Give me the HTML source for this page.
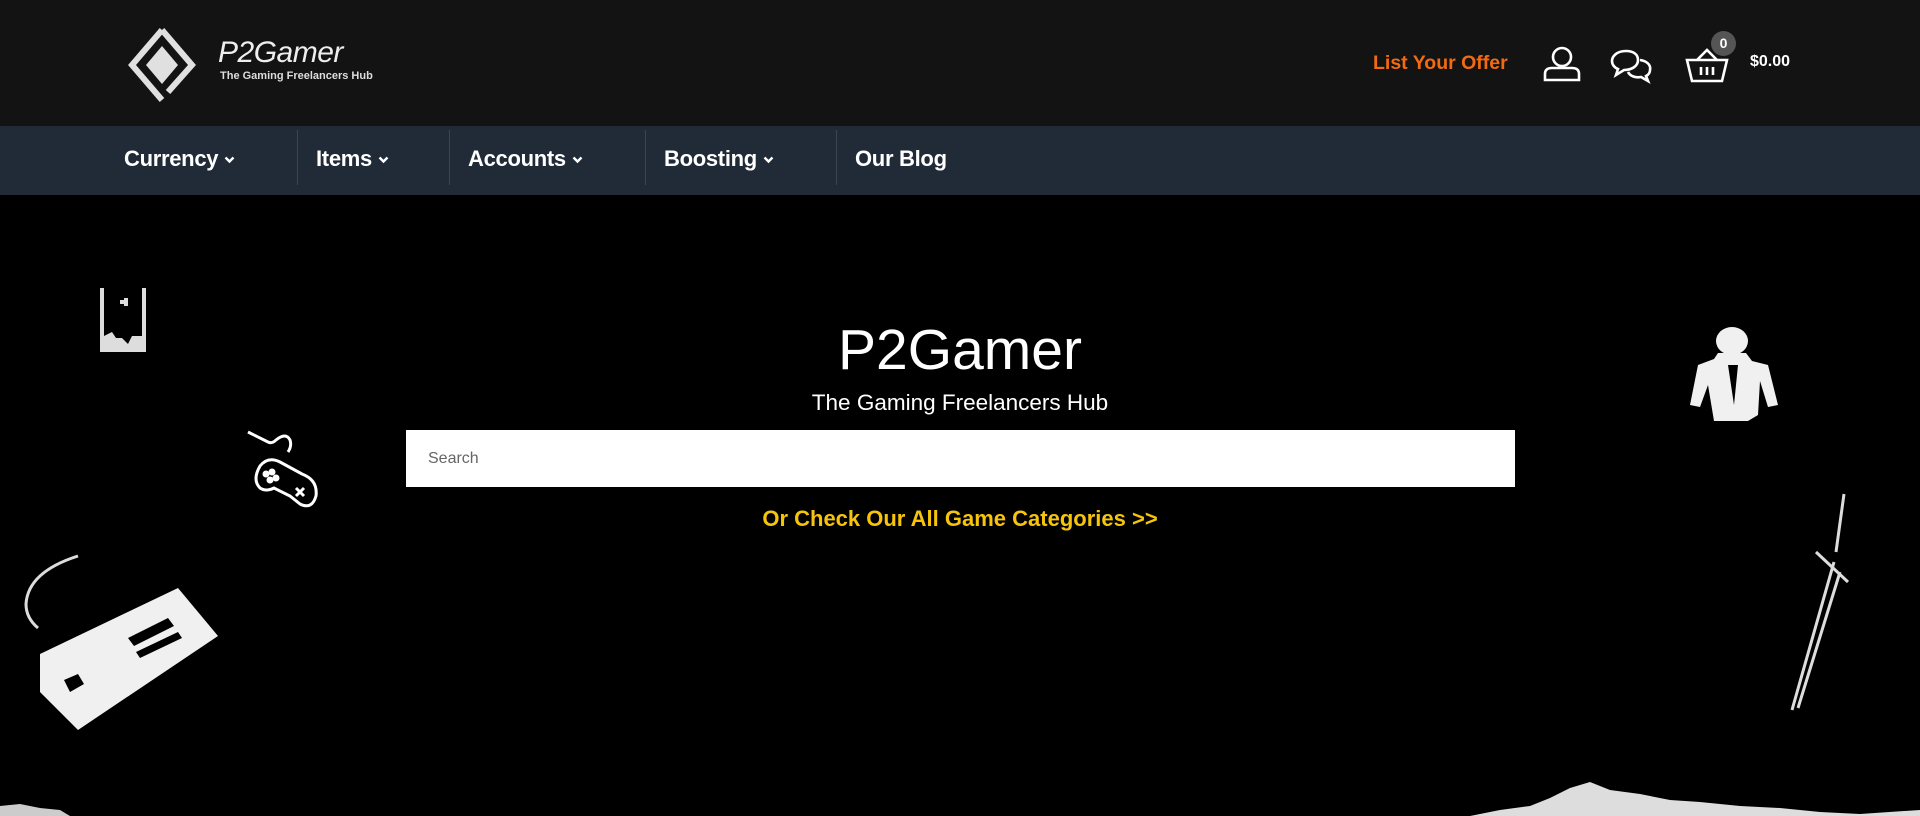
<!DOCTYPE html>
<html><head><meta charset="utf-8"><style>
*{margin:0;padding:0;box-sizing:border-box}
body{width:1920px;height:816px;overflow:hidden;background:#000;font-family:"Liberation Sans",Arial,sans-serif;position:relative}
.hdr{position:absolute;left:0;top:0;width:1920px;height:126px;background:#131313}
.nav{position:absolute;left:0;top:126px;width:1920px;height:69px;background:#212a37}
.nav span{position:absolute;top:0;height:69px;line-height:66px;color:#fff;font-weight:bold;font-size:22px;letter-spacing:-0.3px}
.nav svg{margin-left:6px;vertical-align:2px}
.sep{position:absolute;top:126px;width:1px;height:55px;margin-top:0;background:#3a4452}
.abs{position:absolute}
</style></head><body>
<div class="hdr"></div>
<svg class="abs" style="left:128px;top:28px" width="68" height="74" viewBox="0 0 68 74">
<path d="M34 2 L4 37 L34 72" fill="none" stroke="#e0e0e0" stroke-width="6"/>
<path d="M34 2 L64 37 L40 64" fill="none" stroke="#e0e0e0" stroke-width="6"/>
<path d="M34 18 L50 37 L34 56 L18 37Z" fill="#e0e0e0"/>
</svg>
<div class="abs" style="left:218px;top:36px;color:#eee;font-size:30px;font-style:italic;letter-spacing:-0.5px">P2Gamer</div>
<div class="abs" style="left:220px;top:70px;color:#ddd;font-size:11px;font-weight:bold">The Gaming Freelancers Hub</div>

<div class="abs" style="left:1373px;top:52px;color:#f26a11;font-size:19.5px;font-weight:bold">List Your Offer</div>
<svg class="abs" style="left:1543px;top:46px" width="38" height="36" viewBox="0 0 38 36" fill="none" stroke="#fff" stroke-width="2.6">
<circle cx="19" cy="11" r="9"/><path d="M2 34 V28 Q2 22 9 22 H29 Q36 22 36 28 V34Z"/></svg>
<svg class="abs" style="left:1610px;top:48px" width="44" height="36" viewBox="0 0 44 36" fill="none" stroke="#fff" stroke-width="2.6">
<path d="M16 3 C6 3 2 9 2 13 C2 17 5 20 8 21 L6 27 L14 22 C22 22 28 18 28 12 C28 6 23 3 16 3Z"/>
<path d="M30 12 C37 13 41 17 40 22 C40 25 38 27 36 28 L38 33 L31 29 C25 30 20 28 18 24"/></svg>
<svg class="abs" style="left:1685px;top:46px" width="44" height="38" viewBox="0 0 44 38" fill="none" stroke="#fff" stroke-width="2.6">
<path d="M12 14 L22 4 L32 14"/><path d="M2 14 H42 L37 35 H7Z"/><path d="M16 21 V29 M22 21 V29 M28 21 V29"/></svg>
<div class="abs" style="left:1711px;top:31px;width:25px;height:25px;border-radius:50%;background:#555;color:#fff;font-size:14px;font-weight:bold;text-align:center;line-height:25px">0</div>
<div class="abs" style="left:1750px;top:53px;color:#fff;font-size:16px;font-weight:bold">$0.00</div>

<div class="nav">
<span style="left:124px">Currency<svg width="11" height="8" viewBox="0 0 11 8"><path d="M1.5 1.5 L5.5 5.5 L9.5 1.5" fill="none" stroke="#fff" stroke-width="2.4"/></svg></span>
<span style="left:316px">Items<svg width="11" height="8" viewBox="0 0 11 8"><path d="M1.5 1.5 L5.5 5.5 L9.5 1.5" fill="none" stroke="#fff" stroke-width="2.4"/></svg></span>
<span style="left:468px">Accounts<svg width="11" height="8" viewBox="0 0 11 8"><path d="M1.5 1.5 L5.5 5.5 L9.5 1.5" fill="none" stroke="#fff" stroke-width="2.4"/></svg></span>
<span style="left:664px">Boosting<svg width="11" height="8" viewBox="0 0 11 8"><path d="M1.5 1.5 L5.5 5.5 L9.5 1.5" fill="none" stroke="#fff" stroke-width="2.4"/></svg></span>
<span style="left:855px">Our Blog</span>
</div>
<div class="sep" style="left:297px;top:130px"></div>
<div class="sep" style="left:449px;top:130px"></div>
<div class="sep" style="left:645px;top:130px"></div>
<div class="sep" style="left:836px;top:130px"></div>

<div class="abs" style="left:0;width:1920px;top:317px;text-align:center;color:#fff;font-size:57px">P2Gamer</div>
<div class="abs" style="left:0;width:1920px;top:390px;text-align:center;color:#fff;font-size:22.5px">The Gaming Freelancers Hub</div>
<div class="abs" style="left:406px;top:430px;width:1109px;height:57px;background:#fff;padding-left:22px;line-height:57px;color:#666;font-size:16px">Search</div>
<div class="abs" style="left:0;width:1920px;top:506px;text-align:center;color:#f6c40a;font-size:22px;font-weight:bold">Or Check Our All Game Categories &gt;&gt;</div>

<svg class="abs" style="left:98px;top:286px" width="52" height="68" viewBox="0 0 52 68" fill="#ddd">
<rect x="2" y="2" width="4" height="64"/><rect x="44" y="2" width="4" height="64"/><rect x="2" y="62" width="46" height="4"/>
<path d="M6 62 V50 L14 46 L18 52 L24 52 L30 58 L34 50 L44 50 V62Z"/><rect x="26" y="12" width="4" height="8"/><rect x="22" y="14" width="4" height="4"/></svg>
<svg class="abs" style="left:246px;top:430px" width="82" height="84" viewBox="0 0 82 84" fill="none" stroke="#fff" stroke-width="3">
<path d="M2 2 L22 12 Q26 14 30 10 Q40 2 44 10 Q46 16 42 22"/>
<path d="M14 36 Q22 26 34 32 L56 44 Q72 50 70 66 Q66 80 54 74 L44 66 L28 58 Q20 62 14 58 Q6 50 14 36Z"/>
<circle cx="20" cy="44" r="2" fill="#fff"/><circle cx="26" cy="42" r="2" fill="#fff"/><circle cx="24" cy="50" r="2" fill="#fff"/><circle cx="30" cy="48" r="2" fill="#fff"/>
<path d="M50 58 L58 66 M58 58 L50 66"/></svg>
<svg class="abs" style="left:18px;top:552px" width="200" height="182" viewBox="0 0 200 182">
<path d="M60 4 Q10 20 8 52 Q8 66 20 76" fill="none" stroke="#ddd" stroke-width="3"/>
<path d="M22 102 L160 36 L200 84 L60 178 L22 140Z" fill="#f0f0f0"/>
<path d="M46 128 L60 122 L66 132 L52 140Z" fill="#000"/><path d="M110 86 L150 66 L156 74 L116 94Z" fill="#000"/><path d="M118 100 L160 80 L164 86 L122 106Z" fill="#000"/></svg>
<svg class="abs" style="left:1688px;top:325px" width="92" height="98" viewBox="0 0 92 98" fill="#f0f0f0">
<ellipse cx="44" cy="16" rx="16" ry="14"/><path d="M30 28 L58 28 L64 36 L80 40 L90 80 L80 82 L72 56 L70 90 L60 96 H26 L20 60 L12 82 L2 80 L10 40 L26 34Z"/>
<path d="M40 40 L46 80 L50 40Z" fill="#000"/></svg>
<svg class="abs" style="left:1782px;top:492px" width="70" height="222" viewBox="0 0 70 222" fill="none" stroke="#ddd" stroke-width="3">
<path d="M62 2 L54 60 M34 60 L66 90 M52 70 L10 218 M58 80 L16 216"/></svg>
<svg class="abs" style="left:0;top:780px" width="1920" height="36" viewBox="0 0 1920 36">
<path d="M0 26 L20 24 L40 28 L60 30 L70 36 H0Z" fill="#ccc"/>
<path d="M1470 36 L1500 30 L1530 26 L1550 18 L1570 8 L1590 2 L1610 10 L1640 14 L1670 20 L1700 22 L1740 26 L1780 28 L1820 32 L1860 34 L1920 30 V36Z" fill="#ddd"/></svg>
</body></html>
